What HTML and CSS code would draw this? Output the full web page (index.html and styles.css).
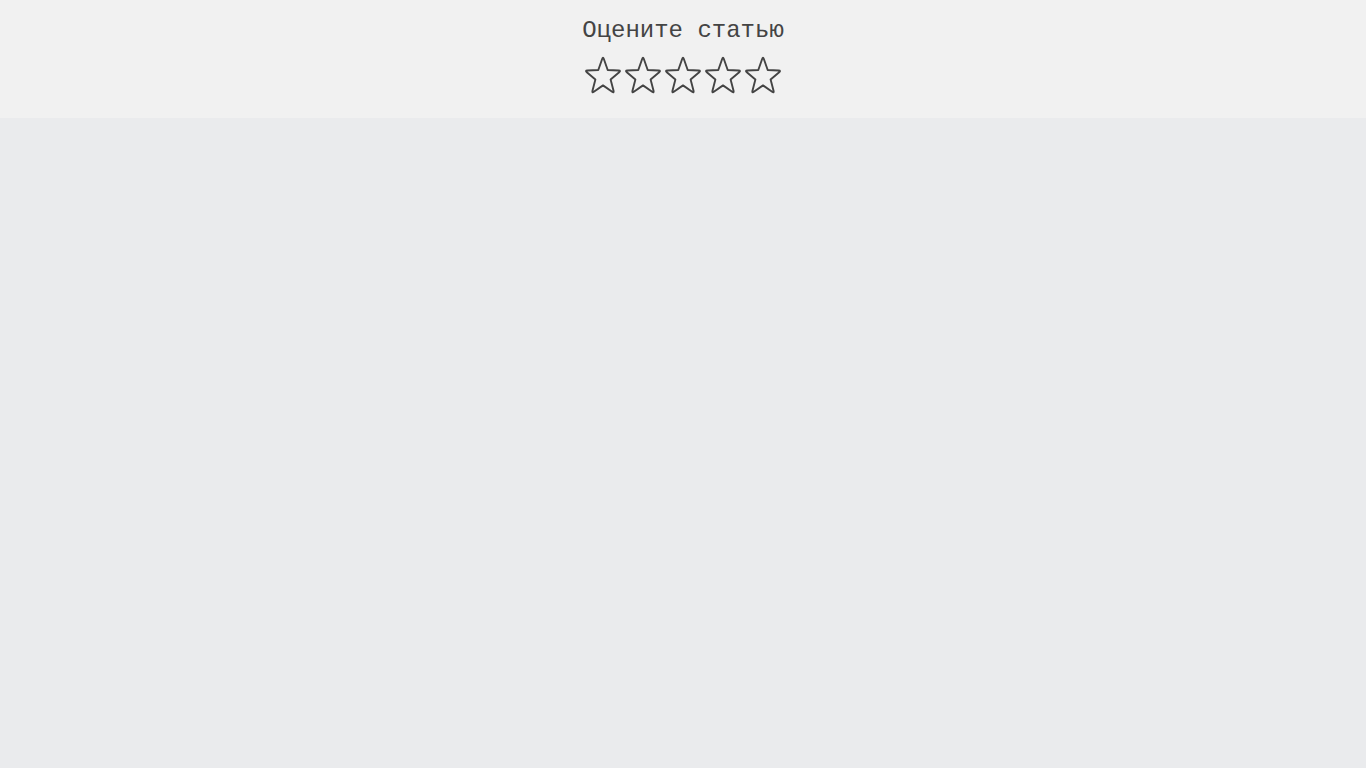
FILE: index.html
```html
<!DOCTYPE html>
<html lang="ru">
<head>
<meta charset="utf-8">
<title>Оцените статью</title>
<link rel="stylesheet" href="styles.css">
</head>
<body>
<header class="rating">
  <h2 class="rating__title">Оцените статью</h2>
  <div class="rating__stars">
    <svg class="star" viewBox="0 0.5 40 37.5" preserveAspectRatio="none" aria-hidden="true"><path d="M19.15 4.26 Q20 2 20.85 4.26 L24.70 14.53 L35.66 15.02 Q38.07 15.13 36.19 16.63 L27.61 23.47 L30.53 34.05 Q31.17 36.37 29.16 35.04 L20 29 L10.84 35.04 Q8.83 36.37 9.47 34.05 L12.39 23.47 L3.81 16.63 Q1.93 15.13 4.34 15.02 L15.30 14.53 Z"/></svg>
    <svg class="star" viewBox="0 0.5 40 37.5" preserveAspectRatio="none" aria-hidden="true"><path d="M19.15 4.26 Q20 2 20.85 4.26 L24.70 14.53 L35.66 15.02 Q38.07 15.13 36.19 16.63 L27.61 23.47 L30.53 34.05 Q31.17 36.37 29.16 35.04 L20 29 L10.84 35.04 Q8.83 36.37 9.47 34.05 L12.39 23.47 L3.81 16.63 Q1.93 15.13 4.34 15.02 L15.30 14.53 Z"/></svg>
    <svg class="star" viewBox="0 0.5 40 37.5" preserveAspectRatio="none" aria-hidden="true"><path d="M19.15 4.26 Q20 2 20.85 4.26 L24.70 14.53 L35.66 15.02 Q38.07 15.13 36.19 16.63 L27.61 23.47 L30.53 34.05 Q31.17 36.37 29.16 35.04 L20 29 L10.84 35.04 Q8.83 36.37 9.47 34.05 L12.39 23.47 L3.81 16.63 Q1.93 15.13 4.34 15.02 L15.30 14.53 Z"/></svg>
    <svg class="star" viewBox="0 0.5 40 37.5" preserveAspectRatio="none" aria-hidden="true"><path d="M19.15 4.26 Q20 2 20.85 4.26 L24.70 14.53 L35.66 15.02 Q38.07 15.13 36.19 16.63 L27.61 23.47 L30.53 34.05 Q31.17 36.37 29.16 35.04 L20 29 L10.84 35.04 Q8.83 36.37 9.47 34.05 L12.39 23.47 L3.81 16.63 Q1.93 15.13 4.34 15.02 L15.30 14.53 Z"/></svg>
    <svg class="star" viewBox="0 0.5 40 37.5" preserveAspectRatio="none" aria-hidden="true"><path d="M19.15 4.26 Q20 2 20.85 4.26 L24.70 14.53 L35.66 15.02 Q38.07 15.13 36.19 16.63 L27.61 23.47 L30.53 34.05 Q31.17 36.37 29.16 35.04 L20 29 L10.84 35.04 Q8.83 36.37 9.47 34.05 L12.39 23.47 L3.81 16.63 Q1.93 15.13 4.34 15.02 L15.30 14.53 Z"/></svg>
  </div>
</header>
<main class="content"></main>
</body>
</html>
```
FILE: styles.css
```css
html, body {
  margin: 0;
  padding: 0;
  height: 100%;
}
body {
  background: #eaebed;
  font-family: "Liberation Mono", "DejaVu Sans Mono", monospace;
  color: #444;
}
.rating {
  background: #f1f1f1;
  height: 118px;
  box-sizing: border-box;
  padding-top: 17px;
  display: flex;
  flex-direction: column;
  align-items: center;
}
.rating__title {
  margin: 0;
  font-size: 24px;
  font-weight: normal;
  line-height: 28px;
  color: #444;
}
.rating__stars {
  display: flex;
  margin-top: 10px;
}
.star {
  width: 40px;
  height: 40px;
  fill: none;
  stroke: #444;
  stroke-width: 1.9px;
  stroke-linejoin: round;
  vector-effect: non-scaling-stroke;
}
.star path {
  vector-effect: non-scaling-stroke;
}
```
